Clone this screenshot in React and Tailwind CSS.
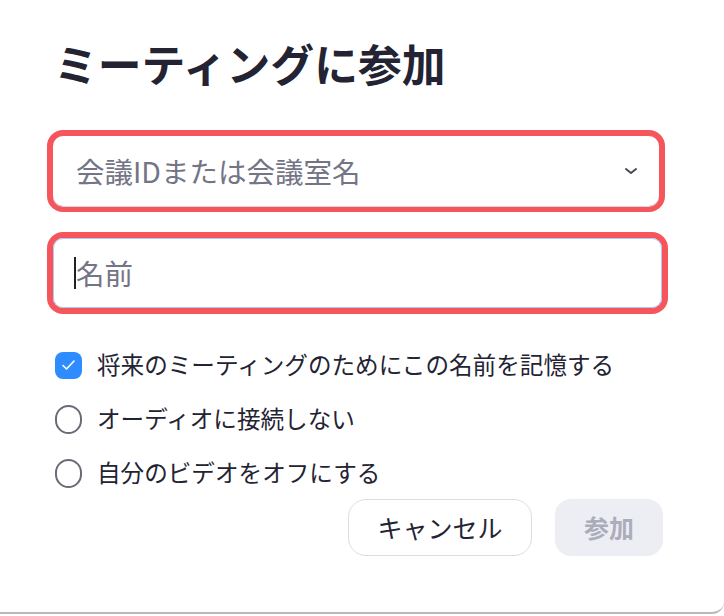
import React from 'react';

const font = { fontFamily: '"Noto Sans CJK JP", "Noto Sans", sans-serif' };

function CheckRow({ checked, label }) {
  return (
    <div className="flex items-center h-[28px]">
      {checked ? (
        <span className="w-[27px] h-[27px] rounded-[8px] bg-[#2d8cff] flex items-center justify-center">
          <svg width="15" height="12" viewBox="0 0 15 12" fill="none">
            <path d="M2 6.5 L5.5 10 L13 2" stroke="white" strokeWidth="1.6" strokeLinecap="round" strokeLinejoin="round" />
          </svg>
        </span>
      ) : (
        <span className="w-[27px] h-[29px] rounded-full border-2 border-[#6b6b78] bg-white" />
      )}
      <span className="ml-[15px] text-[23.6px] leading-none text-[#232333]">{label}</span>
    </div>
  );
}

export default function App() {
  return (
    <div className="w-[724px] h-[616px] bg-white" style={font}>
      <div className="h-[614px] border-b-2 border-[#b9b9bd] rounded-br-[12px] flex flex-col">
        {/* タイトル */}
        <h1 className="mt-[39px] ml-[54px] h-[48px] leading-[48px] text-[43.8px] font-bold text-[#232333]">
          ミーティングに参加
        </h1>

        {/* 会議ID */}
        <div className="mt-[43px] ml-[47px] w-[618px] h-[82px] rounded-[16px] border-[6px] border-[#f5555b] bg-white">
          <div className="h-full rounded-[10px] shadow-[0_1px_0_#d6d6dc] flex items-center pl-[23px] pr-[23px]">
            <span className="text-[28.5px] leading-none text-[#747487] flex-1">会議IDまたは会議室名</span>
            <svg width="14" height="8" viewBox="0 0 14 8" fill="none" className="mr-[-2px]">
              <path d="M2 2 L7 6 L12 2" stroke="#4a4a55" strokeWidth="2" strokeLinecap="round" strokeLinejoin="round" />
            </svg>
          </div>
        </div>

        {/* 名前 */}
        <div className="mt-[20px] ml-[47px] w-[621px] h-[82px] rounded-[16px] border-[6px] border-[#f5555b] bg-white">
          <div className="h-full rounded-[10px] border border-[#a9c9f7] flex items-center pl-[20px]">
            <span className="w-[2px] h-[32px] bg-[#222]" />
            <span className="text-[28.5px] leading-none text-[#747487]">名前</span>
          </div>
        </div>

        {/* チェックボックス */}
        <div className="mt-[37px] ml-[55px] flex flex-col gap-[26px]">
          <CheckRow checked label="将来のミーティングのためにこの名前を記憶する" />
          <CheckRow label="オーディオに接続しない" />
          <CheckRow label="自分のビデオをオフにする" />
        </div>

        {/* ボタン */}
        <div className="mt-[12px] flex justify-end gap-[23px] pr-[61px]">
          <button className="w-[184px] h-[57px] rounded-[18px] border border-[#dcdce4] bg-white text-[25px] font-normal text-[#232333]">
            キャンセル
          </button>
          <button className="w-[108px] h-[57px] rounded-[16px] bg-[#ededf4] text-[25px] font-bold text-[#acacba]">
            参加
          </button>
        </div>
      </div>
    </div>
  );
}
